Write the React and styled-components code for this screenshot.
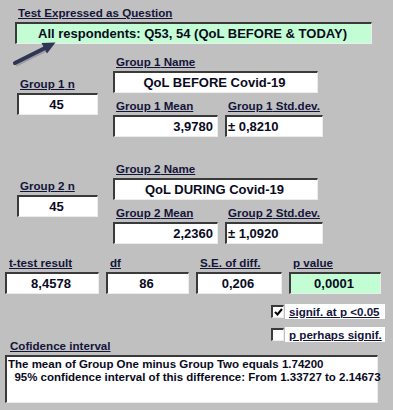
import React from "react"
import styled, { createGlobalStyle } from "styled-components"

const GlobalStyle = createGlobalStyle`
  html, body {
    margin: 0;
    background: #c0c0c0;
  }
  body {
    font-family: "Liberation Sans", Arial, sans-serif;
  }
`

const Form = styled.div`
  position: relative;
  width: 393px;
  height: 410px;
  box-sizing: border-box;
  padding-top: 6px;
  background: #c0c0c0;
  overflow: hidden;
`

const Label = styled.div`
  height: 14px;
  line-height: 14px;
  margin-bottom: 2px;
  padding-left: ${(p) => (p.$indent !== undefined ? p.$indent : 3)}px;
  font-size: 11.6px;
  font-weight: bold;
  color: #14143a;
  text-decoration: underline;
  white-space: nowrap;
`

const justify = { left: "flex-start", right: "flex-end", center: "center" }

const Field = styled.div`
  box-sizing: border-box;
  width: ${(p) => (p.$w ? `${p.$w}px` : "100%")};
  height: 22px;
  display: flex;
  align-items: center;
  justify-content: ${(p) => justify[p.$align || "center"]};
  padding: 0 4px 0 1px;
  background: ${(p) => (p.$green ? "#c2fdd3" : "#ffffff")};
  border-style: solid;
  border-width: 2px 1px 1px 2px;
  border-color: #3a3a3a #ececec #ececec #3a3a3a;
  font-size: 13px;
  font-weight: bold;
  color: #0a0a1e;
  white-space: nowrap;
`

const Question = styled.div`
  margin-left: 15px;
`

const Group = styled.div`
  display: grid;
  grid-template-columns: 81px auto;
  column-gap: 15px;
  padding-left: 17px;
  margin-top: ${(p) => p.$top}px;
`

const CountColumn = styled.div`
  padding-top: ${(p) => p.$offset}px;
`

const StatRow = styled.div`
  display: flex;
  gap: 7px;
  margin-top: 6px;
`

const ResultRow = styled.div`
  display: grid;
  grid-template-columns: 94px 83px 86px 92px;
  column-gap: 7px;
  padding-left: 5px;
  margin-top: 12px;
`

const Footer = styled.div`
  display: grid;
  grid-template-columns: 1fr auto;
  margin-top: 10px;
  padding-left: 5px;
`

const ConfLabel = styled(Label)`
  align-self: end;
  margin-bottom: 0;
`

const Checks = styled.div`
  padding-right: 8px;
  padding-bottom: 11px;
`

const CheckRow = styled.div`
  display: flex;
  align-items: center;
  gap: 1px;
  height: 15px;
  & + & {
    margin-top: 8px;
  }
`

const Box = styled.div`
  box-sizing: border-box;
  width: 13px;
  height: 13px;
  background: #fff;
  border-style: solid;
  border-width: 2px 1px 1px 2px;
  border-color: #3a3a3a #ececec #ececec #3a3a3a;
  display: flex;
  align-items: center;
  justify-content: center;
`

const CheckText = styled.div`
  width: 100px;
  height: 15px;
  line-height: 15px;
  box-sizing: border-box;
  padding-left: 4px;
  background: #fff;
  font-size: 11.6px;
  font-weight: bold;
  color: #14143a;
  text-decoration: underline;
  white-space: nowrap;
`

const Memo = styled.div`
  box-sizing: border-box;
  width: 373px;
  height: 48px;
  margin: 2px 0 0 5px;
  padding: 1px 0 0 1px;
  background: #fff;
  border-style: solid;
  border-width: 2px 1px 1px 2px;
  border-color: #3a3a3a #ececec #ececec #3a3a3a;
  font-size: 11.5px;
  font-weight: bold;
  line-height: 13px;
  color: #0a0a1e;
  white-space: pre;
`

const Arrow = styled.svg`
  position: absolute;
  left: 10px;
  top: 40px;
`

function Checkbox({ checked, label }) {
  return (
    <CheckRow>
      <Box>
        {checked && (
          <svg width="9" height="8" viewBox="0 0 9 8">
            <polyline points="1,4 3.5,6.5 8,1" fill="none" stroke="#000" strokeWidth="2" />
          </svg>
        )}
      </Box>
      <CheckText>{label}</CheckText>
    </CheckRow>
  )
}

function GroupBlock({ n, top, offset, name, mean, sd }) {
  return (
    <Group $top={top}>
      <CountColumn $offset={offset}>
        <Label>Group {n} n</Label>
        <Field $w={81}>45</Field>
      </CountColumn>
      <div>
        <Label>Group {n} Name</Label>
        <Field $w={205}>{name}</Field>
        <StatRow>
          <div>
            <Label>Group {n} Mean</Label>
            <Field $w={105} $align="right">{mean}</Field>
          </div>
          <div>
            <Label>Group {n} Std.dev.</Label>
            <Field $w={98} $align="left">± {sd}</Field>
          </div>
        </StatRow>
      </div>
    </Group>
  )
}

const results = [
  { label: "t-test result", value: "8,4578" },
  { label: "df", value: "86" },
  { label: "S.E. of diff.", value: "0,206" },
  { label: "p value", value: "0,0001", green: true }
]

export default function App() {
  return (
    <Form>
      <GlobalStyle />
      <Question>
        <Label>Test Expressed as Question</Label>
        <Field $w={357} $green>
          All respondents: Q53, 54 (QoL BEFORE &amp; TODAY)
        </Field>
      </Question>

      <Arrow width="50" height="28" viewBox="0 0 50 28">
        <line x1="6" y1="25" x2="36" y2="10" stroke="#80808a" strokeWidth="3.5" opacity="0.55" />
        <line x1="5" y1="23" x2="36" y2="7.5" stroke="#2d3753" strokeWidth="4" strokeLinecap="round" />
        <polygon points="45.5,2.5 37,13.5 31.5,3" fill="#2d3753" />
      </Arrow>

      <GroupBlock n={1} top={11} offset={22} name="QoL BEFORE Covid-19" mean="3,9780" sd="0,8210" />
      <GroupBlock n={2} top={25} offset={17} name="QoL DURING Covid-19" mean="2,2360" sd="1,0920" />

      <ResultRow>
        {results.map((r) => (
          <div key={r.label}>
            <Label $indent={4}>{r.label}</Label>
            <Field $green={r.green}>{r.value}</Field>
          </div>
        ))}
      </ResultRow>

      <Footer>
        <ConfLabel $indent={5}>Cofidence interval</ConfLabel>
        <Checks>
          <Checkbox checked label="signif. at p <0.05" />
          <Checkbox label="p perhaps signif." />
        </Checks>
      </Footer>
      <Memo>
        {"The mean of Group One minus Group Two equals 1.74200\n  95% confidence interval of this difference: From 1.33727 to 2.14673"}
      </Memo>
    </Form>
  )
}
